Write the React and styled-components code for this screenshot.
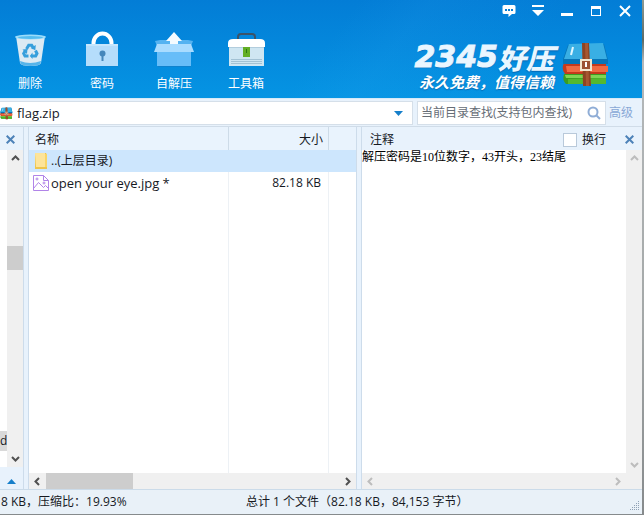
import React from "react";
import styled, { createGlobalStyle, css } from "styled-components";

const GlobalStyle = createGlobalStyle`
  * { box-sizing: border-box; }
  html, body, #root { height: 100%; }
  body {
    margin: 0;
    overflow: hidden;
    background: linear-gradient(#8c9a94 0, #5b6a66 40px, #b4b8ba 62px, #a4a8a8 320px, #868a8c 100%);
    color: #16191f;
    font: 12px/16px "Open Sans", "Noto Sans CJK SC", sans-serif;
  }
  button, input, textarea { font: inherit; color: inherit; }
  button { padding: 0; border: 0; background: none; }
  svg { display: block; }
`;

const Window = styled.main`
  display: flex;
  flex-direction: column;
  height: calc(100% - 1px);
  margin-right: 2px;
  background: #e8f2fc;
`;

const Banner = styled.header`
  flex: none;
  display: flex;
  flex-direction: column;
  height: 99px;
  border-bottom: 1px solid #d6e9f7;
  background:
    linear-gradient(128deg, transparent 50%, rgba(50, 170, 245, 0.1) 60%, rgba(50, 170, 245, 0) 80%),
    linear-gradient(#037dd6, #0594e3);
  color: #fff;
`;

const WindowButtons = styled.div`
  display: flex;
  justify-content: flex-end;
  gap: 12px;
  height: 22px;
  padding-right: 9px;
`;

const WindowButton = styled.button`
  display: grid;
  place-items: center;
  width: 17px;
  height: 22px;
`;

const BannerBody = styled.div`
  flex: 1;
  display: flex;
  justify-content: space-between;
`;

const Toolbar = styled.nav`
  display: flex;
  padding: 9px 0 0 0;
  margin-left: -6px;
`;

const Tool = styled.button`
  display: flex;
  flex-direction: column;
  align-items: center;
  justify-content: flex-start;
  gap: 7px;
  width: 72px;
`;

const Brand = styled.div`
  display: flex;
  align-items: center;
  gap: 8px;
  padding: 10px 32px 0 0;
`;

const BrandText = styled.div`
  display: flex;
  flex-direction: column;
  align-items: flex-end;
  font-style: italic;
  white-space: nowrap;
  text-shadow: 0 1px 1px rgba(0, 60, 130, 0.5);
`;

const BrandName = styled.div`
  display: flex;
  font: italic 900 28px/32px "Noto Sans CJK SC", sans-serif;
  color: #e9f6ff;
`;

const BrandDigits = styled.span`
  font: italic bold 30px/32px "DejaVu Sans", sans-serif;
  -webkit-text-stroke: 1px #e9f6ff;
`;

const Slogan = styled.div`
  font: italic 700 15px/17px "Noto Sans CJK SC", sans-serif;
`;

const AddressRow = styled.div`
  flex: none;
  display: flex;
  align-items: center;
  height: 28px;
  padding: 1px 9px 0 0;
  border-bottom: 1px solid #d0dce8;
`;

const Field = styled.div`
  display: flex;
  align-items: center;
  height: 24px;
  border: 1px solid #d5dfe9;
  background: #fff;
`;

const PathField = styled(Field)`
  flex: 1;
  min-width: 0;
  gap: 4px;
  border-left: 0;
  padding-right: 9px;
  margin-right: 4px;
`;

const SearchField = styled(Field)`
  flex: none;
  width: 189px;
  padding: 0 4px 0 3px;
`;

const FieldInput = styled.input`
  flex: 1;
  min-width: 0;
  width: 0;
  padding: 0;
  border: 0;
  outline: 0;
  background: none;
  font-size: ${(p) => (p.$large ? "13px" : "12px")};
  &::placeholder { color: #666d76; opacity: 1; }
`;

const Advanced = styled.a`
  margin-left: 3px;
  color: #88a8d6;
  text-decoration: none;
`;

const Panels = styled.div`
  flex: 1;
  display: grid;
  grid-template-columns: 24px minmax(0, 329px) minmax(280px, 1fr);
  column-gap: 4px;
  min-height: 0;
`;

const Panel = styled.section`
  display: flex;
  flex-direction: column;
  min-width: 0;
  min-height: 0;
  border: 0 solid #cddceb;
  border-width: ${(p) => p.$edges};
`;

const PanelHeader = styled.div`
  flex: none;
  display: flex;
  align-items: center;
  gap: 5px;
  height: 23px;
  padding: ${(p) => (p.$narrow ? "2px 0 0 6px" : "2px 8px 0 8px")};
`;

const PanelTitle = styled.h2`
  flex: 1;
  margin: 0;
  font-size: 12px;
  font-weight: 400;
`;

const PanelBody = styled.div`
  flex: 1;
  display: flex;
  min-height: 0;
  background: #fff;
`;

const TreeItems = styled.div`
  flex: 1;
  display: flex;
  align-items: flex-end;
  padding-bottom: 16px;
  min-width: 0;
`;

const TreeItem = styled.div`
  width: 7px;
  height: 20px;
  background: #d9d9d9;
  font-size: 12px;
  line-height: 20px;
`;

const TreeFooter = styled.div`
  flex: none;
  display: flex;
  justify-content: center;
  height: 22px;
  padding-top: 7px;
`;

const scrollAxis = {
  vertical: css`flex-direction: column; width: 16px; padding: 4px 0;`,
  horizontal: css`height: 16px; padding: 0 4px;`,
};

const ScrollTrack = styled.div`
  flex: none;
  display: flex;
  align-items: center;
  background: #f0f0f0;
  color: ${(p) => (p.$off ? "#bdbdbd" : "#505050")};
  ${(p) => scrollAxis[p.$axis]}
`;

const ScrollGap = styled.div`
  flex: ${(p) => p.$grow};
`;

const Thumb = styled.div`
  flex: none;
  background: #cdcdcd;
  ${(p) => (p.$axis === "vertical" ? css`width: 16px; height: 24px;` : css`width: 87px; height: 16px; margin-left: 4px;`)}
`;

const TableArea = styled.div`
  flex: 1;
  display: grid;
  min-height: 0;
  background: #fff;
`;

const FileTable = styled.table`
  width: 100%;
  height: 100%;
  table-layout: fixed;
  border-collapse: separate;
  border-spacing: 0;
`;

const Column = styled.col`
  width: ${(p) => p.$width};
`;

const HeadCell = styled.th`
  height: 23px;
  padding: 2px 5px 0 6px;
  border-right: ${(p) => (p.$last ? "0" : "1px solid #cddbe8")};
  background: #e9f3fd;
  font-weight: 400;
  text-align: ${(p) => p.$align || "left"};
`;

const Cell = styled.td`
  height: 22px;
  padding: ${(p) => (p.$align ? "0 7px 0 0" : "0 0 0 4px")};
  border-right: ${(p) => (p.$last || p.$plain ? "0" : "1px solid #edf1f5")};
  text-align: ${(p) => p.$align || "left"};
`;

const Row = styled.tr`
  background: ${(p) => (p.$selected ? "#cde6fd" : "#fff")};
`;

const FillRow = styled.tr`
  height: 100%;
`;

const FileName = styled.span`
  display: flex;
  align-items: center;
  gap: 2px;
  white-space: nowrap;
  font-size: ${(p) => (p.$large ? "13px" : "12px")};
`;

const WrapLabel = styled.label`
  display: flex;
  align-items: center;
  gap: 5px;
  margin-right: 14px;
`;

const Check = styled.input`
  appearance: none;
  width: 14px;
  height: 14px;
  margin: 0;
  border: 1px solid #b9c9da;
  background: #fff;
`;

const CommentText = styled.textarea`
  flex: 1;
  min-width: 0;
  padding: 0;
  border: 0;
  outline: 0;
  resize: none;
  overflow: hidden;
  background: #fff;
  color: #000;
  font: 12px/14px "Liberation Serif", "Noto Sans CJK SC", serif;
`;

const StatusBar = styled.footer`
  flex: none;
  display: grid;
  grid-template-columns: 245px 1fr auto;
  align-items: center;
  height: 25px;
  padding-left: 1px;
  border-top: 1px solid #cbdbe9;
  background: #e9f1f8;
  white-space: nowrap;
`;

const GripCell = styled.div`
  align-self: end;
  padding: 0 2px 3px 0;
`;

const chevrons = {
  up: "M1 6 4.5 2.5 8 6",
  down: "M1 3 4.5 6.5 8 3",
  left: "M6 1 2.5 4.5 6 8",
  right: "M3 1 6.5 4.5 3 8",
};

function ScrollButton({ to, disabled }) {
  return (
    <button type="button" aria-label={to} disabled={disabled}>
      <svg width="9" height="9" viewBox="0 0 9 9" fill="none" stroke={disabled ? "#bdbdbd" : "#505050"} strokeWidth="2">
        <path d={chevrons[to]} />
      </svg>
    </button>
  );
}

function CloseIcon() {
  return (
    <svg width="9" height="9" viewBox="0 0 9 9" stroke="#4d82b8" strokeWidth="2">
      <path d="M.7.7 8.3 8.3M8.3.7.7 8.3" />
    </svg>
  );
}

function Triangle({ up }) {
  return (
    <svg width="9" height="5" viewBox="0 0 9 5" fill="#167fca">
      <path d={up ? "M0 5h9L4.5 0z" : "M0 0h9L4.5 5z"} />
    </svg>
  );
}

function BinIcon() {
  return (
    <svg width="40" height="38" viewBox="0 0 40 38">
      <path d="M6 5h29l-4 27q-1 3-10.500 3T10 32z" fill="#dceaf3" />
      <path d="M10 30q10 4 21 0l-.5 2.500Q29 35 20.500 35T10.500 32.500z" fill="#55b4ea" />
      <ellipse cx="20.500" cy="6" rx="15.500" ry="2.500" fill="#9bdcfb" />
      <ellipse cx="20.500" cy="6.500" rx="12.500" ry="1.500" fill="#55bdf0" />
      <g fill="none" stroke="#369fdc" strokeWidth="3">
        <path d="m16.500 18 2.200-3.700h3l2 3.200M25.500 19.500l1.500 3-1.300 2.500H22M18.500 25H15l-1.300-2.500 1.700-3" />
      </g>
      <path d="m25.800 14-.5 5.300-4.800-2.300zM22.500 21.500V28L19.800 25zM12.500 18.500l5-.5-.5 5z" fill="#369fdc" />
    </svg>
  );
}

function LockIcon() {
  return (
    <svg width="40" height="38" viewBox="0 0 40 38">
      <path d="M11.500 15v-3a8.500 9 0 0 1 18 0v3" fill="none" stroke="#fff" strokeWidth="4" />
      <path d="M4 14h32v21.500H4z" fill="#1777bd" opacity=".5" />
      <path d="M4 13h32v22H4z" fill="#b5ddfb" />
      <path d="M4 13h32v2H4z" fill="#c6e6fd" />
      <circle cx="20.500" cy="22.500" r="3" fill="#4687bb" />
      <path d="M19.500 23h2v7h-2z" fill="#4687bb" />
    </svg>
  );
}

function BoxIcon() {
  return (
    <svg width="40" height="38" viewBox="0 0 40 38">
      <path d="m1 10 5-1h28l5 1-2 5H3z" fill="#55b3f1" />
      <path d="M4 21h33v15H4z" fill="#1777bd" opacity=".5" />
      <path d="M3 20h34v15H3z" fill="#67bdf8" />
      <path d="M3 13h34l3 8H0z" fill="#a9dcff" />
      <path d="m20 1 8 9h-4v3h-8v-3h-4z" fill="#f4fbff" />
    </svg>
  );
}

function ToolboxIcon() {
  return (
    <svg width="40" height="38" viewBox="0 0 40 38">
      <path d="M12 8V6q0-3 3-3h11q3 0 3 3v2" fill="none" stroke="#3b5369" strokeWidth="2" />
      <path d="M3 16h35v19H3z" fill="#cfe6f2" />
      <path d="M2 16v-4q0-4 5-4h27q5 0 5 4v4z" fill="#fff" />
      <path d="M3 16.500h35" stroke="#b2cddd" />
      <path d="M5 28.500h31M5 30.500h31M5 32.500h31" stroke="#a3c2d4" />
      <path d="M17 16h7v10h-7z" fill="#62ae25" />
      <path d="M20 18h1v4h-1z" fill="#2d7811" />
    </svg>
  );
}

function ArchiveIcon({ size }) {
  return (
    <svg width={size} height={size} viewBox="0 0 48 46">
      <path d="M2 32h42v10H4q-4-4-2-10z" fill="#3b9c20" />
      <path d="M3 33h41v3H4z" fill="#80d453" />
      <path d="M44 36v6H6v-5z" fill="#54b82f" />
      <path d="M2 21h42v11H3q-4-5-1-11z" fill="#c53a1d" />
      <path d="M4 24h42v6H5z" fill="#f16a42" />
      <path d="m6 3 36-1 4 16v4H1v-5z" fill="#0875b7" />
      <path d="m7 2 34-1 4 16H2z" fill="#39afe4" />
      <path d="m11 5-2 8" stroke="#dff6ff" strokeWidth="2" />
      <path d="M20 1h7l2 43h-8z" fill="#8d4322" />
      <path d="M23 1h3l1 43h-3z" fill="#a65731" />
      <path d="M19 18h10v10H19z" fill="#9c5233" stroke="#f2e6ce" strokeWidth="2" />
      <path d="M24 20v5" stroke="#fff" strokeWidth="2" />
    </svg>
  );
}

function FolderIcon() {
  return (
    <svg width="16" height="16" viewBox="0 0 16 16">
      <path d="M2 0h11l1 2v14H2z" fill="#edc54e" />
      <path d="M2 0h10v14H3z" fill="#fde49a" />
      <path d="M12 1h2v13h-2z" fill="#f9d567" />
    </svg>
  );
}

function ImageIcon() {
  return (
    <svg width="16" height="16" viewBox="0 0 16 16" fill="none" stroke="#b184e8">
      <path d="M.5.5h10l5 5v10H.500zM10.500.500v5h5M.500 13.500l5-6 5 5 2-2 3 3" />
      <circle cx="4" cy="4" r="1" />
      <circle cx="11" cy="8" r="1" />
    </svg>
  );
}

const tools = [
  { label: "删除", icon: <BinIcon /> },
  { label: "密码", icon: <LockIcon /> },
  { label: "自解压", icon: <BoxIcon /> },
  { label: "工具箱", icon: <ToolboxIcon /> },
];

const windowButtons = [
  {
    label: "反馈",
    icon: <><path d="M3 2h10q1.500 0 1.500 1.500v6Q14.500 11 13 11h-2l-3.500 3v-3H3Q1.500 11 1.500 9.500v-6Q1.500 2 3 2z" fill="#fff" /><path d="M4 6h2v2H4zM7 6h2v2H7zM10 6h2v2h-2z" fill="#087fd5" /></>,
  },
  { label: "菜单", icon: <path d="M2 2h12v2H2zM2 7h12l-6 6z" fill="#fff" /> },
  { label: "最小化", icon: <path d="M2 10h12v3H2z" fill="#fff" /> },
  { label: "最大化", icon: <path d="M3 3h10v10H3zM4 6v6h8V6z" fill="#fff" fillRule="evenodd" /> },
  { label: "关闭", icon: <path d="m3 3 10 10M13 3 3 13" stroke="#fff" strokeWidth="2" /> },
];

export default function App() {
  return (
    <>
      <GlobalStyle />
      <Window>
        <Banner>
          <WindowButtons>
            {windowButtons.map((b) => (
              <WindowButton key={b.label} type="button" aria-label={b.label}>
                <svg width="16" height="16" viewBox="0 0 16 16">{b.icon}</svg>
              </WindowButton>
            ))}
          </WindowButtons>
          <BannerBody>
            <Toolbar>
              {tools.map((t) => (
                <Tool key={t.label} type="button">{t.icon}<span>{t.label}</span></Tool>
              ))}
            </Toolbar>
            <Brand>
              <BrandText>
                <BrandName><BrandDigits>2345</BrandDigits>好压</BrandName>
                <Slogan>永久免费，值得信赖</Slogan>
              </BrandText>
              <ArchiveIcon size={48} />
            </Brand>
          </BannerBody>
        </Banner>

        <AddressRow>
          <PathField>
            <ArchiveIcon size={13} />
            <FieldInput $large aria-label="路径" defaultValue="flag.zip" />
            <button type="button" aria-label="展开路径"><Triangle /></button>
          </PathField>
          <SearchField>
            <FieldInput aria-label="查找" placeholder="当前目录查找(支持包内查找)" />
            <button type="button" aria-label="搜索">
              <svg width="14" height="14" viewBox="0 0 14 14" fill="none" stroke="#8fadd6" strokeWidth="2">
                <circle cx="6" cy="6" r="4.500" />
                <path d="m9 9 4 4" />
              </svg>
            </button>
          </SearchField>
          <Advanced href="#">高级</Advanced>
        </AddressRow>

        <Panels>
          <Panel $edges="0 1px 0 0">
            <PanelHeader $narrow>
              <button type="button" aria-label="关闭目录"><CloseIcon /></button>
            </PanelHeader>
            <PanelBody>
              <TreeItems><TreeItem>d</TreeItem></TreeItems>
              <ScrollTrack $axis="vertical">
                <ScrollButton to="up" />
                <ScrollGap $grow={83} />
                <Thumb $axis="vertical" />
                <ScrollGap $grow={183} />
                <ScrollButton to="down" />
              </ScrollTrack>
            </PanelBody>
            <TreeFooter>
              <button type="button" aria-label="展开"><Triangle up /></button>
            </TreeFooter>
          </Panel>

          <Panel $edges="0 1px 0 1px">
            <TableArea>
              <FileTable>
                <colgroup><Column $width="auto" /><Column $width="100px" /><Column $width="27px" /></colgroup>
                <thead>
                  <tr><HeadCell>名称</HeadCell><HeadCell $align="right">大小</HeadCell><HeadCell $last /></tr>
                </thead>
                <tbody>
                  <Row $selected>
                    <Cell $plain><FileName><FolderIcon />..(上层目录)</FileName></Cell><Cell $plain /><Cell $last />
                  </Row>
                  <Row>
                    <Cell><FileName $large><ImageIcon />open your eye.jpg *</FileName></Cell>
                    <Cell $align="right">82.18 KB</Cell><Cell $last />
                  </Row>
                  <FillRow><Cell /><Cell /><Cell $last /></FillRow>
                </tbody>
              </FileTable>
            </TableArea>
            <ScrollTrack $axis="horizontal">
              <ScrollButton to="left" />
              <Thumb $axis="horizontal" />
              <ScrollGap $grow={1} />
              <ScrollButton to="right" />
            </ScrollTrack>
          </Panel>

          <Panel $edges="0 0 0 1px">
            <PanelHeader>
              <PanelTitle>注释</PanelTitle>
              <WrapLabel><Check type="checkbox" />换行</WrapLabel>
              <button type="button" aria-label="关闭注释"><CloseIcon /></button>
            </PanelHeader>
            <PanelBody>
              <CommentText aria-label="注释" defaultValue="解压密码是10位数字，43开头，23结尾" />
              <ScrollTrack $axis="vertical" $off>
                <ScrollButton to="up" disabled />
                <ScrollGap $grow={1} />
                <ScrollButton to="down" disabled />
              </ScrollTrack>
            </PanelBody>
            <ScrollTrack $axis="horizontal" $off>
              <ScrollButton to="left" disabled />
              <ScrollGap $grow={1} />
              <ScrollButton to="right" disabled />
              <Corner />
            </ScrollTrack>
          </Panel>
        </Panels>

        <StatusBar>
          <span>8 KB，压缩比：19.93%</span>
          <span>总计 1 个文件（82.18 KB，84,153 字节）</span>
          <GripCell>
            <svg width="10" height="10" viewBox="0 0 10 10" fill="#8fa1b5">
              <path d="M8 0h1v1H8zM6 2h1v1H6zM8 2h1v1H8zM4 4h1v1H4zM6 4h1v1H6zM8 4h1v1H8zM2 6h1v1H2zM4 6h1v1H4zM6 6h1v1H6zM8 6h1v1H8zM0 8h1v1H0zM2 8h1v1H2zM4 8h1v1H4zM6 8h1v1H6zM8 8h1v1H8z" />
            </svg>
          </GripCell>
        </StatusBar>
      </Window>
    </>
  );
}

const Corner = styled.div`
  width: 16px;
`;
